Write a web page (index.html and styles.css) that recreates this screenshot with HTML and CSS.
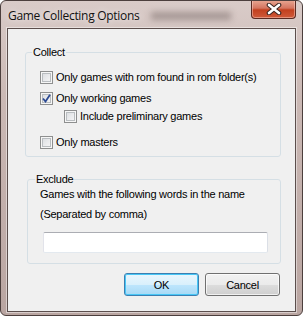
FILE: index.html
```html
<!DOCTYPE html>
<html>
<head>
	<title>Game Collecting Options</title>
	<meta charset="utf-8">
	<link rel="stylesheet" href="styles.css">
</head>
<body>

	<div class="window">
		<div class="titlebar">
			<span class="title">Game Collecting Options</span>
			<span class="smudge"></span>
			<span class="close">
				<svg width="16" height="12" viewBox="0 0 16 12">
					<path d="M3 2 L13 10 M13 2 L3 10" stroke="#3a2622" stroke-width="4.6" stroke-linecap="round"/>
					<path d="M3 2 L13 10 M13 2 L3 10" stroke="#fff" stroke-width="2.6" stroke-linecap="round"/>
				</svg>
			</span>
		</div>

		<div class="client">
			<fieldset class="group group-collect">
				<legend>Collect</legend>
				<label class="check row-1"><span class="box"></span>Only games with rom found in rom folder(s)</label>
				<label class="check row-2"><span class="box checked">
					<svg width="9" height="9" viewBox="0 0 9 9"><path d="M1 4.5 L3.5 7.5 L8 0.8" fill="none" stroke="#2c4a93" stroke-width="1.8"/></svg>
				</span>Only working games</label>
				<label class="check row-3"><span class="box"></span>Include preliminary games</label>
				<label class="check row-4"><span class="box"></span>Only masters</label>
			</fieldset>

			<fieldset class="group group-exclude">
				<legend>Exclude</legend>
				<p class="hint">Games with the following words in the name<br>(Separated by comma)</p>
				<div class="textbox"></div>
			</fieldset>

			<div class="buttons">
				<button class="btn btn-default">OK</button>
				<button class="btn">Cancel</button>
			</div>
		</div>
	</div>

</body>
</html>
```

FILE: styles.css
```css
body,html{
	margin:0;
	background: #fff;
}

.window{
	width:303px;
	height:316px;
	box-sizing:border-box;
	border:1px solid #4c3f3d;
	border-radius:6px;
	background: linear-gradient(180deg, #d9cbc8 0%, #cbb9b5 30%, #b9a5a1 100%);
	display:flex;
	flex-direction:column;
	overflow:hidden;
	position:relative;
}

.titlebar{
	height:27px;
	display:flex;
	align-items:flex-start;
	flex-shrink:0;
}

.title{
	font-family: "Open Sans", sans-serif;
	font-size:12px;
	letter-spacing:-0.3px;
	line-height:15px;
	color:#111;
	margin:7px 0 0 7px;
	text-shadow: 0 0 6px rgba(255,255,255,0.9);
}

/* blurred window behind the glass */
.smudge{
	position:absolute;
	left:150px;
	top:11px;
	width:80px;
	height:8px;
	background:#7d6f6c;
	filter:blur(3px);
	opacity:0.55;
}

.close{
	margin:-1px 6px 0 auto;
	width:45px;
	height:19px;
	box-sizing:border-box;
	border:1px solid #5a2a22;
	border-top:none;
	border-radius:0 0 4px 4px;
	background: linear-gradient(180deg, #e9a894 0%, #d47560 45%, #c2401f 55%, #cf5a3a 100%);
	box-shadow: inset 0 0 0 1px rgba(255,220,210,0.45);
	display:flex;
	align-items:center;
	justify-content:center;
	position:relative;
	z-index:1;
}

.client{
	flex:1;
	margin:0 6px 3px 6px;
	border:1px solid #5b4e4c;
	box-shadow: 0 0 0 1px rgba(255,255,255,0.45);
	background:#f0f0f0;
	font-family: "Liberation Sans", Arial, sans-serif;
	font-size:11px;
	letter-spacing:-0.25px;
	color:#000;
	display:flex;
	flex-direction:column;
}

.group{
	border:1px solid #d5dfe5;
	border-radius:3px;
	padding:0 0 0 6px;
	min-width:0;
}

.group legend{
	padding:0 1px;
	line-height:13px;
}

.group-collect{
	margin:17px 14px 0 17px;
	padding-bottom:7px;
}

.group-exclude{
	margin:16px 14px 0 19px;
	padding-left:7px;
	padding-bottom:10px;
}

.check{
	display:flex;
	align-items:center;
	gap:3px;
	height:13px;
	line-height:13px;
	margin-left:8px;
}

.row-1{ margin-top:12px; }
.row-2{ margin-top:8px; }
.row-3{ margin-top:5px; margin-left:32px; }
.row-4{ margin-top:13px; }

.box{
	width:13px;
	height:13px;
	box-sizing:border-box;
	border:1px solid #8e8f8f;
	background: linear-gradient(135deg, #d6d9dd 0%, #e9eaec 50%, #f9f9f9 100%);
	box-shadow: inset 0 0 0 1px #f6f6f6, inset 0 0 0 2px #b9bdc0;
	flex-shrink:0;
	display:flex;
	align-items:center;
	justify-content:center;
}

.hint{
	margin:-2px 0 0 5px;
	line-height:20px;
}

.textbox{
	width:225px;
	height:21px;
	box-sizing:border-box;
	margin:8px 0 0 8px;
	background:#fff;
	border:1px solid #e3e9ef;
	border-top-color:#abadb3;
	border-left-color:#e2e3ea;
	border-right-color:#dbdfe6;
	border-radius:2px;
}

.buttons{
	display:flex;
	justify-content:flex-end;
	gap:6px;
	margin:9px 15px 0 0;
}

.btn{
	width:75px;
	height:23px;
	padding:0;
	font-family: "Liberation Sans", Arial, sans-serif;
	font-size:11px;
	letter-spacing:-0.25px;
	color:#000;
	border:1px solid #707070;
	border-radius:3px;
	background: linear-gradient(180deg, #f2f2f2 0%, #ebebeb 50%, #dddddd 51%, #cfcfcf 100%);
	box-shadow: inset 0 0 0 1px rgba(255,255,255,0.7);
}

.btn-default{
	border-color:#3c7fb1;
	background: linear-gradient(180deg, #eaf6fd 0%, #d9f0fc 50%, #bee6fd 51%, #a7d9f5 100%);
	box-shadow: inset 0 0 0 1px #48c7f6;
}
```
